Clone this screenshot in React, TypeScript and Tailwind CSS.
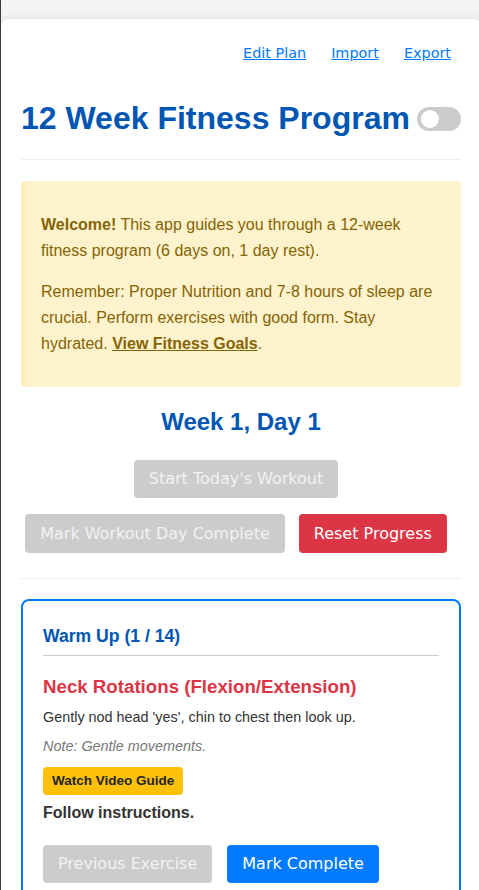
import React from "react";

const arial = { fontFamily: '"Liberation Sans", Arial, sans-serif' };

export default function App() {
  return (
    <div
      className="min-h-[890px] bg-[#f4f4f4] border-l border-[#3a3a3a] overflow-hidden font-['Liberation_Sans',Arial,sans-serif]"
    >
      <div className="mt-[19px] w-[480px] bg-white rounded-[8px] shadow-[0_0_10px_rgba(0,0,0,0.1)] pt-[20px] px-[20px] pb-[40px]">
        {/* Nav */}
        <div className="h-[28px] pt-[1px] flex items-center justify-end gap-[25px] pr-[10px] font-['DejaVu_Sans',sans-serif] text-[14.4px] text-[#007bff]">
          <a className="underline cursor-pointer">Edit Plan</a>
          <a className="underline cursor-pointer">Import</a>
          <a className="underline cursor-pointer">Export</a>
        </div>

        {/* Header */}
        <div className="mt-[33px] pb-[22px] border-b border-[#eeeeee] flex items-center justify-between">
          <h1 className="text-[32px] leading-[37px] font-bold text-[#0056b3]">
            12 Week Fitness Program
          </h1>
          <div className="w-[44px] h-[24px] rounded-full bg-[#cccccc] relative shrink-0">
            <div className="absolute left-[4px] top-[3px] w-[18px] h-[18px] rounded-full bg-white" />
          </div>
        </div>

        {/* Warning */}
        <div className="mt-[21px] bg-[#fff3cd] border-l-[5px] border-[#ffeeba] rounded-[4px] py-[15px] pl-[15px] pr-[15px] text-[16px] leading-[26px] text-[#856404]">
          <p className="mt-[16px] mb-[15px]">
            <strong>Welcome!</strong> This app guides you through a 12-week fitness program (6 days on, 1 day
            rest).
          </p>
          <p className="mt-[15px] mb-[15px]">
            Remember: Proper Nutrition and 7-8 hours of sleep are crucial. Perform exercises with good form.
            Stay hydrated. <a className="font-bold underline cursor-pointer">View Fitness Goals</a>.
          </p>
        </div>

        {/* Week title */}
        <h2 className="mt-[21px] text-center text-[24px] leading-[28px] font-bold text-[#0056b3]">
          Week 1, Day 1
        </h2>

        <div className="font-['DejaVu_Sans',sans-serif] text-[16px] pb-[25px] border-b border-[#eeeeee]">
          <div className="mt-[24px] flex justify-center pr-[10px]">
            <button className="h-[38px] px-[15px] rounded-[4px] bg-[#cccccc] text-[#f2f2f2]">
              Start Today's Workout
            </button>
          </div>
          <div className="mt-[16px] flex justify-center gap-[14px] pr-[10px]">
            <button className="h-[39px] px-[15px] rounded-[4px] bg-[#cccccc] text-[#f2f2f2]">
              Mark Workout Day Complete
            </button>
            <button className="h-[39px] px-[15px] rounded-[4px] bg-[#dc3545] text-white">
              Reset Progress
            </button>
          </div>
        </div>

        {/* Exercise card */}
        <div className="mt-[20px] border-2 border-[#007bff] rounded-[8px] px-[20px] pt-[20px] pb-[30px]" style={arial}>
          <h3 className="mt-[5px] pb-[9px] border-b border-[#cccccc] text-[17.6px] leading-[20px] font-bold text-[#0056b3]">
            Warm Up (1 / 14)
          </h3>
          <h4 className="mt-[20px] text-[18.7px] leading-[22px] font-bold text-[#dc3545]">
            Neck Rotations (Flexion/Extension)
          </h4>
          <p className="mt-[9px] text-[14.4px] leading-[20px] text-[#333333]">
            Gently nod head 'yes', chin to chest then look up.
          </p>
          <p className="mt-[9px] text-[14.4px] leading-[20px] italic text-[#777777]">Note: Gentle movements.</p>
          <button className="mt-[11px] h-[28px] px-[9px] rounded-[4px] bg-[#ffc107] text-[#212529] text-[13.5px] font-bold">
            Watch Video Guide
          </button>
          <p className="mt-[8px] text-[16px] leading-[20px] font-bold text-[#333333]">Follow instructions.</p>
          <div className="mt-[22px] flex gap-[15px] font-['DejaVu_Sans',sans-serif] text-[16px]">
            <button className="h-[38px] px-[15px] rounded-[4px] bg-[#cccccc] text-[#f2f2f2]">
              Previous Exercise
            </button>
            <button className="h-[38px] px-[15px] rounded-[4px] bg-[#007bff] text-white">Mark Complete</button>
          </div>
        </div>
      </div>
    </div>
  );
}
